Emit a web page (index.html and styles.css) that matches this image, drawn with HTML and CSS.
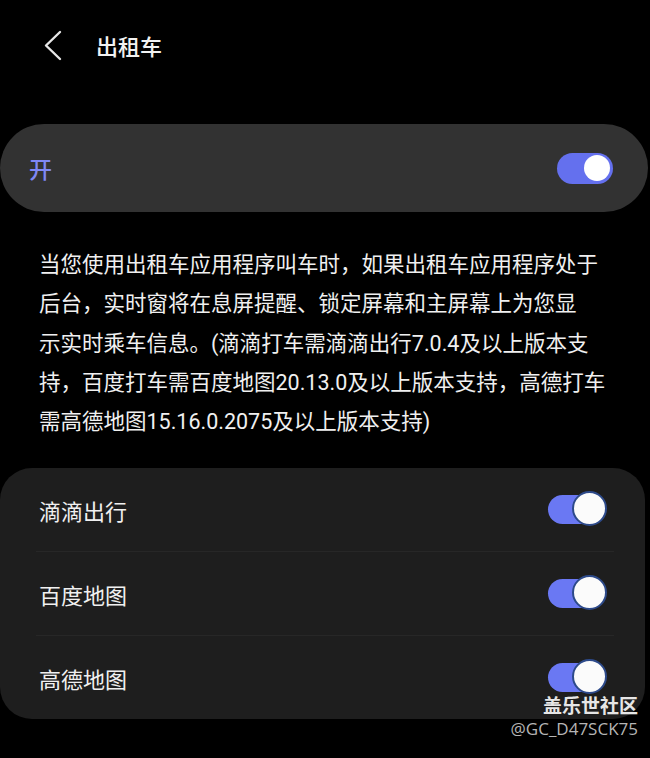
FILE: index.html
```html
<!DOCTYPE html>
<html lang="zh-CN">
<head>
    <meta charset="UTF-8">
    <meta name="viewport" content="width=device-width, initial-scale=1.0">
    <title>出租车</title>
    <link rel="stylesheet" href="styles.css">
</head>
<body>

<div class="header">
    <svg class="back" width="22" height="32" viewBox="0 0 22 32">
        <polyline points="17,3 3,16.5 17,30" fill="none" stroke="#e6e6e6" stroke-width="2.4" stroke-linecap="round" stroke-linejoin="round"/>
    </svg>
    <span class="title">出租车</span>
</div>

<div class="master">
    <span class="master-label">开</span>
    <span class="main-switch"><span class="main-knob"></span></span>
</div>

<p class="desc">当您使用出租车应用程序叫车时，如果出租车应用程序处于<br>后台，实时窗将在息屏提醒、锁定屏幕和主屏幕上为您显<br>示实时乘车信息。(滴滴打车需滴滴出行7.0.4及以上版本支<br>持，百度打车需百度地图20.13.0及以上版本支持，高德打车<br>需高德地图15.16.0.2075及以上版本支持)</p>

<div class="list">
    <div class="row">
        <span class="row-label">滴滴出行</span>
        <span class="switch"><span class="knob"></span></span>
    </div>
    <div class="divider"></div>
    <div class="row">
        <span class="row-label">百度地图</span>
        <span class="switch"><span class="knob"></span></span>
    </div>
    <div class="divider"></div>
    <div class="row">
        <span class="row-label">高德地图</span>
        <span class="switch"><span class="knob"></span></span>
    </div>
</div>

<div class="watermark">
    <div class="wm-name">盖乐世社区</div>
    <div class="wm-id">@GC_D47SCK75</div>
</div>

</body>
</html>
```

FILE: styles.css
```css
body { margin: 0; background: #000; color: #f2f2f2; font-family: Roboto, "Noto Sans CJK SC", sans-serif; position: relative; height: 758px; overflow: hidden; }

.header { display: flex; align-items: center; height: 92px; padding-left: 43px; }
.back { display: block; margin-top: -2px; }
.title { margin-left: 31px; font-size: 22px; font-weight: 500; color: #f2f2f2; margin-top: -2px; }

.master { display: flex; align-items: center; justify-content: space-between; height: 88px; margin: 32px 2px 0 0; padding: 0 35px 0 29px; background: #323232; border-radius: 44px; }
.master-label { font-size: 23px; color: #7f88f5; font-weight: 500; }
.main-switch { display: flex; align-items: center; justify-content: flex-end; width: 56px; height: 31px; padding: 0 3px; box-sizing: border-box; background: #6470ee; border-radius: 16px; }
.main-knob { width: 26px; height: 26px; border-radius: 50%; background: #fff; }

.desc { margin: 33px 0 0; padding: 0 0 0 39px; font-size: 21.5px; line-height: 39.3px; color: #f0f0f0; white-space: nowrap; }

.list { margin: 27px 5px 0 0; background: #1e1e1e; border-radius: 32px; }
.row { display: flex; align-items: center; justify-content: space-between; height: 83px; padding: 0 40px 0 39px; }
.row-label { font-size: 22px; color: #f0f0f0; }
.divider { height: 1px; margin: 0 31px 0 36px; background: #272727; }

.switch { position: relative; width: 55px; height: 29px; background: #6a78f3; border-radius: 15px; margin-right: 2px; }
.knob { position: absolute; right: -3px; top: -3px; width: 31px; height: 31px; border-radius: 50%; background: #fbfbfb; border: 2px solid #2d4a8a; box-sizing: content-box; margin: -1px; }

.watermark { position: absolute; right: 12px; bottom: 18px; text-align: right; }
.wm-name { font-size: 19px; font-weight: 700; color: #e6e6e6; line-height: 22px; }
.wm-id { font-size: 17px; color: #b5b5b5; line-height: 22px; font-family: "Open Sans", sans-serif; }
```
